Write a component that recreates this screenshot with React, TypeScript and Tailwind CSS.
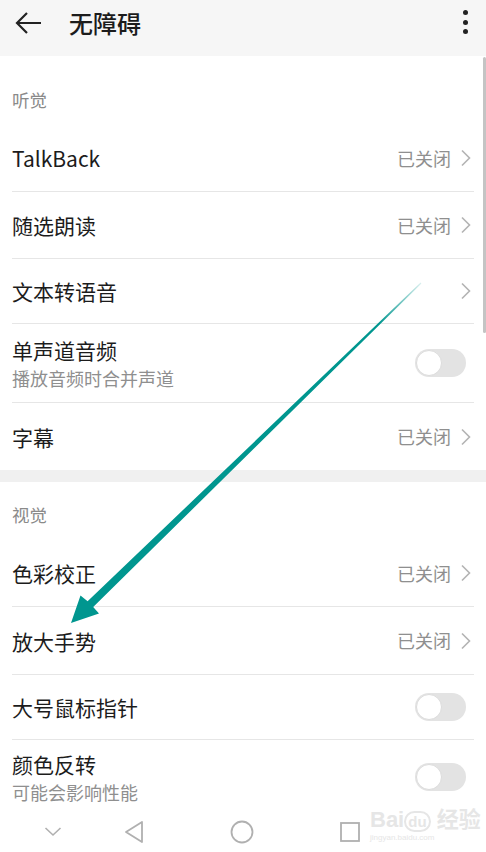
import React from 'react';

const font = { fontFamily: '"Noto Sans CJK SC", "Noto Sans", sans-serif' };

const Chevron = () => (
  <svg width="12" height="18" viewBox="0 0 12 18" className="ml-[9px] mr-[2px]">
    <path d="M2 1.5 L9.5 9 L2 16.5" fill="none" stroke="#b3b3b3" strokeWidth="1.6" />
  </svg>
);

const Toggle = () => (
  <div className="w-[51px] h-[28px] rounded-full bg-[#e3e3e3] relative mr-[8px]">
    <div className="absolute left-[1px] top-[1px] w-[26px] h-[26px] rounded-full bg-white border border-[#dcdcdc]" />
  </div>
);

type Row = { title: string; sub?: string; value?: string; chevron?: boolean; toggle?: boolean; h: string };

const Item = ({ row, last }: { row: Row; last?: boolean }) => (
  <div className={`mx-[12px] flex items-center justify-between ${row.h} ${last ? '' : 'border-b border-[#e6e6e6]'}`}>
    <div className="flex flex-col">
      <span className="text-[21px] leading-[28px] text-[#1c1c1c]">{row.title}</span>
      {row.sub && <span className="text-[18px] leading-[26px] mt-[1px] text-[#8f8f8f]">{row.sub}</span>}
    </div>
    <div className="flex items-center">
      {row.value && <span className="text-[18px] text-[#8f8f8f]">{row.value}</span>}
      {row.chevron && <Chevron />}
      {row.toggle && <Toggle />}
    </div>
  </div>
);

export default function App() {
  const hearing: Row[] = [
    { title: 'TalkBack', value: '已关闭', chevron: true, h: 'h-[67px]' },
    { title: '随选朗读', value: '已关闭', chevron: true, h: 'h-[67px]' },
    { title: '文本转语音', chevron: true, h: 'h-[65px]' },
    { title: '单声道音频', sub: '播放音频时合并声道', toggle: true, h: 'h-[79px]' },
    { title: '字幕', value: '已关闭', chevron: true, h: 'h-[67px]' },
  ];
  const vision: Row[] = [
    { title: '色彩校正', value: '已关闭', chevron: true, h: 'h-[67px]' },
    { title: '放大手势', value: '已关闭', chevron: true, h: 'h-[68px]' },
    { title: '大号鼠标指针', toggle: true, h: 'h-[65px]' },
    { title: '颜色反转', sub: '可能会影响性能', toggle: true, h: 'h-[74px]' },
  ];

  return (
    <div className="relative w-[486px] h-[852px] overflow-hidden bg-white flex flex-col" style={font}>
      <div className="h-[56px] bg-[#f6f6f6] flex items-start pt-[9px] px-[14px] shrink-0">
        <svg width="28" height="26" viewBox="0 0 28 26" className="mt-[1px]">
          <path d="M27 13 H3 M13 3 L3 13 L13 23" fill="none" stroke="#222" strokeWidth="2.2" />
        </svg>
        <span className="ml-[27px] text-[24px] leading-[28px] font-medium text-[#1c1c1c]">无障碍</span>
        <div className="ml-auto flex flex-col gap-[4.5px] items-center mr-[4px] pt-[1px]">
          <span className="w-[5px] h-[5px] rounded-full bg-[#222]" />
          <span className="w-[5px] h-[5px] rounded-full bg-[#222]" />
          <span className="w-[5px] h-[5px] rounded-full bg-[#222]" />
        </div>
      </div>

      <div className="flex-1 overflow-hidden">
        <div className="h-[69px] px-[12px] flex items-end pb-[12px] text-[17.5px] text-[#8a8a8a]">听觉</div>
        {hearing.map((r, i) => (
          <Item key={r.title} row={r} last={i === hearing.length - 1} />
        ))}
        <div className="h-[12px] bg-[#f0f0f0]" />
        <div className="h-[58px] px-[12px] flex items-end pb-[12px] text-[17.5px] text-[#8a8a8a]">视觉</div>
        {vision.map((r, i) => (
          <Item key={r.title} row={r} last={i === vision.length - 1} />
        ))}
      </div>

      <div className="h-[38px] shrink-0 bg-white flex items-center pb-[2px]">
        <svg width="18" height="12" viewBox="0 0 18 12" className="ml-[44px]">
          <path d="M1.5 2 L9 9 L16.5 2" fill="none" stroke="#b0b0b0" strokeWidth="1.6" />
        </svg>
        <svg width="20" height="24" viewBox="0 0 20 24" className="ml-[62px]">
          <path d="M18 2 L2 12 L18 22 Z" fill="none" stroke="#b0b0b0" strokeWidth="1.8" strokeLinejoin="round" />
        </svg>
        <svg width="24" height="24" viewBox="0 0 24 24" className="ml-[86px]">
          <circle cx="12" cy="12" r="10.5" fill="none" stroke="#b0b0b0" strokeWidth="1.8" />
        </svg>
        <svg width="22" height="22" viewBox="0 0 22 22" className="ml-[85px]">
          <rect x="2" y="2" width="18" height="18" fill="none" stroke="#b0b0b0" strokeWidth="1.8" />
        </svg>
      </div>

      <div className="absolute right-[0px] top-[57px] w-[3px] h-[276px] bg-[#c4c4c4] rounded-full" />

      <div className="absolute left-[370px] top-[806px] flex flex-col leading-none text-[#e6e6e6]">
        <span className="text-[22px] font-bold" style={{ fontFamily: '"Liberation Sans", sans-serif' }}>
          Bai<span className="text-[15px] border-2 border-[#e6e6e6] rounded-full px-[2px]">du</span>{' '}
          <span style={font}>经验</span>
        </span>
        <span className="text-[8px] mt-[3px]" style={{ fontFamily: '"Liberation Sans", sans-serif' }}>jingyan.baidu.com</span>
      </div>

      <svg className="absolute left-0 top-0 pointer-events-none" width="486" height="852" viewBox="0 0 486 852">
        <defs>
          <linearGradient id="ag" x1="421" y1="283" x2="71" y2="623" gradientUnits="userSpaceOnUse">
            <stop offset="0" stopColor="#00968f" stopOpacity="0.15" />
            <stop offset="0.12" stopColor="#00968f" stopOpacity="1" />
            <stop offset="1" stopColor="#00968f" stopOpacity="1" />
          </linearGradient>
        </defs>
        <polygon
          points="420.6,282.6 87.6,601.3 80.5,595.5 71,623 99,613.5 93.2,607.1 421.4,283.4"
          fill="url(#ag)"
        />
      </svg>
    </div>
  );
}
